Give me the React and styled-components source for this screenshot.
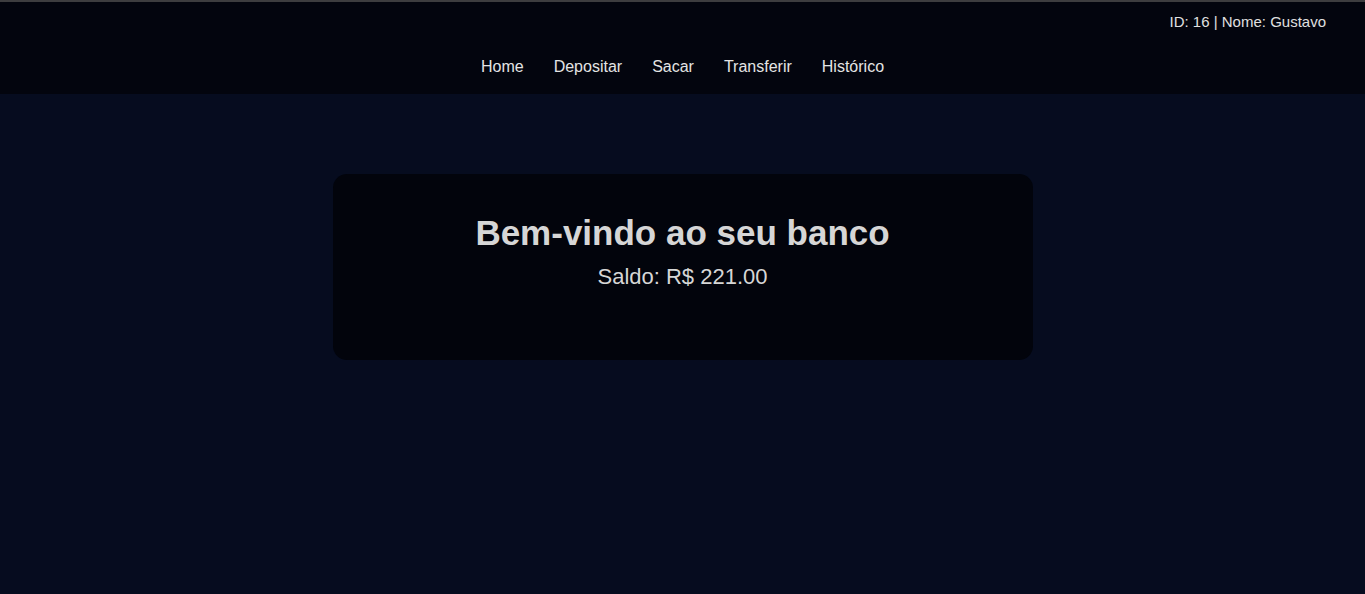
import React from 'react'
import styled, { createGlobalStyle } from 'styled-components'

const GlobalStyle = createGlobalStyle`
  html, body {
    margin: 0;
    padding: 0;
    background: #060c1f;
    font-family: "Liberation Sans", Arial, sans-serif;
    color: #d9d9d9;
  }
  #root {
    min-height: 594px;
    border-top: 2px solid #3d3d3f;
  }
`

const Header = styled.header`
  background: #03050e;
  padding: 11px 39px 8px;
`

const UserInfo = styled.div`
  text-align: right;
  font-size: 15px;
  line-height: 17px;
  color: #e0e0e0;
`

const Nav = styled.nav`
  display: flex;
  justify-content: center;
  margin-top: 18px;
`

const NavLink = styled.a`
  padding: 10px 15px;
  font-size: 16px;
  line-height: 18px;
  color: #e4e4e4;
  text-decoration: none;
  cursor: pointer;
`

const Card = styled.section`
  width: 700px;
  box-sizing: border-box;
  margin: 80px auto 0;
  padding: 40px 40px 71px;
  background: #02040c;
  border-radius: 14px;
  text-align: center;
`

const Title = styled.h1`
  margin: 0;
  font-size: 35px;
  line-height: 37px;
  font-weight: bold;
  color: #d6d6d6;
`

const Balance = styled.p`
  margin: 14px 0 0;
  font-size: 22px;
  line-height: 24px;
  color: #d6d6d6;
`

const links = ['Home', 'Depositar', 'Sacar', 'Transferir', 'Histórico']

export default function App() {
  return (
    <>
      <GlobalStyle />
      <Header>
        <UserInfo>ID: 16 | Nome: Gustavo</UserInfo>
        <Nav>
          {links.map((l) => (
            <NavLink key={l}>{l}</NavLink>
          ))}
        </Nav>
      </Header>
      <Card>
        <Title>Bem-vindo ao seu banco</Title>
        <Balance>Saldo: R$ 221.00</Balance>
      </Card>
    </>
  )
}
